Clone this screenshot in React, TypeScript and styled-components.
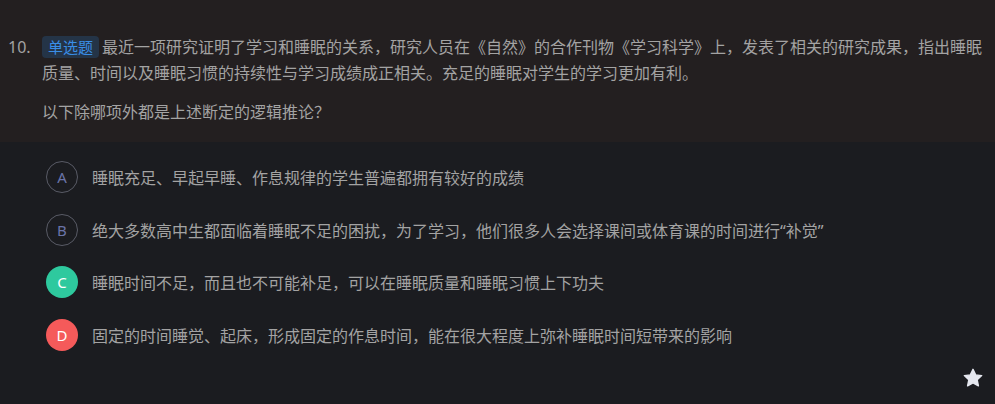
import styled, { createGlobalStyle } from "styled-components";

const GlobalStyle = createGlobalStyle`
  html, body {
    margin: 0;
    padding: 0;
    background: #1b1c20;
  }
  body {
    font-family: "Noto Sans", "Noto Sans CJK SC", sans-serif;
  }
`

const Page = styled.div`
  position: relative;
  min-height: 404px;
  background: #1b1c20;
`

const Stem = styled.div`
  display: flex;
  background: #231f20;
  padding: 34px 10px 17px 8px;
`

const Num = styled.div`
  width: 34px;
  flex-shrink: 0;
  font-size: 16px;
  line-height: 26px;
  color: #a3a3a3;
`

const Body = styled.div`
  flex: 1;
  font-size: 16px;
  line-height: 26px;
  color: #a3a3a3;
`

const Tag = styled.span`
  display: inline-block;
  height: 22px;
  line-height: 22px;
  padding: 0 6px;
  margin-right: 3px;
  border-radius: 4px;
  background: #243447;
  color: #3a8ee6;
  font-size: 15px;
  vertical-align: top;
  margin-top: 2px;
`

const Para = styled.p`
  margin: 0;
  & + & {
    margin-top: 13px;
  }
`

const Options = styled.div`
  display: flex;
  flex-direction: column;
  padding: 9px 0 0 46px;
`

const Option = styled.div`
  display: flex;
  align-items: center;
  gap: 14px;
  height: 52.5px;
  font-size: 16px;
  color: #a3a3a3;
`

const Mark = styled.div<{ $state?: "right" | "wrong" }>`
  width: 32px;
  height: 32px;
  box-sizing: border-box;
  border-radius: 50%;
  display: flex;
  align-items: center;
  justify-content: center;
  font-size: 15px;
  flex-shrink: 0;
  border: ${p => (p.$state ? "none" : "1px solid #595b66")};
  background: ${p => (p.$state === "right" ? "#2ec99e" : p.$state === "wrong" ? "#f55a5a" : "transparent")};
  color: ${p => (p.$state ? "#ffffff" : "#6a74a8")};
`

const StarBtn = styled.div`
  position: absolute;
  right: 11px;
  bottom: 15px;
  width: 22px;
  height: 22px;
`

const options: { key: string; text: string; state?: "right" | "wrong" }[] = [
  { key: "A", text: "睡眠充足、早起早睡、作息规律的学生普遍都拥有较好的成绩" },
  { key: "B", text: "绝大多数高中生都面临着睡眠不足的困扰，为了学习，他们很多人会选择课间或体育课的时间进行“补觉”" },
  { key: "C", text: "睡眠时间不足，而且也不可能补足，可以在睡眠质量和睡眠习惯上下功夫", state: "right" },
  { key: "D", text: "固定的时间睡觉、起床，形成固定的作息时间，能在很大程度上弥补睡眠时间短带来的影响", state: "wrong" },
]

export default function App() {
  return (
    <Page>
      <GlobalStyle />
      <Stem>
        <Num>10.</Num>
        <Body>
          <Para>
            <Tag>单选题</Tag>
            最近一项研究证明了学习和睡眠的关系，研究人员在《自然》的合作刊物《学习科学》上，发表了相关的研究成果，指出睡眠质量、时间以及睡眠习惯的持续性与学习成绩成正相关。充足的睡眠对学生的学习更加有利。
          </Para>
          <Para>以下除哪项外都是上述断定的逻辑推论？</Para>
        </Body>
      </Stem>
      <Options>
        {options.map(o => (
          <Option key={o.key}>
            <Mark $state={o.state}>{o.key}</Mark>
            <span>{o.text}</span>
          </Option>
        ))}
      </Options>
      <StarBtn>
        <svg width="22" height="22" viewBox="0 0 24 24">
          <path
            d="M12 2.5l2.9 6.1 6.6.8-4.9 4.6 1.3 6.6L12 17.3l-5.9 3.3 1.3-6.6-4.9-4.6 6.6-.8z"
            fill="#e6e8f0"
            stroke="#e6e8f0"
            strokeWidth="1.5"
            strokeLinejoin="round"
          />
        </svg>
      </StarBtn>
    </Page>
  )
}
